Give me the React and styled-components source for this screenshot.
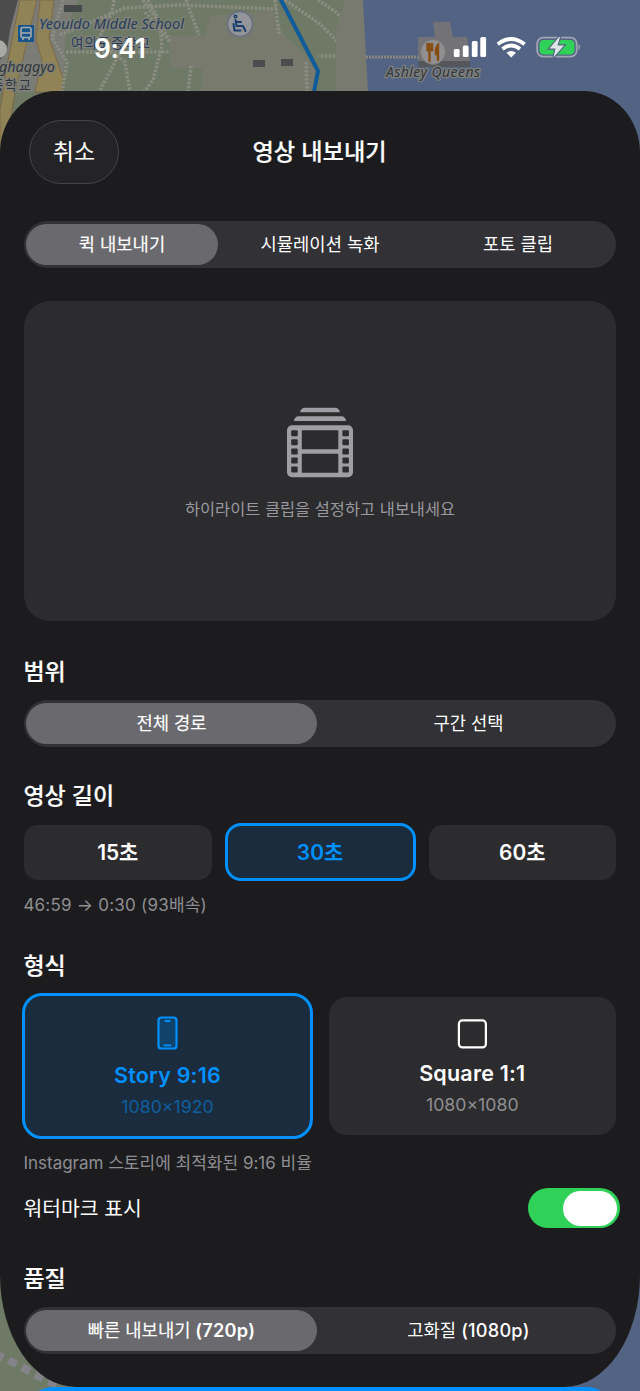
import React, { useState } from "react";
import styled, { createGlobalStyle, css } from "styled-components";

const GlobalStyle = createGlobalStyle`
  *, *::before, *::after { box-sizing: border-box; }
  html, body { margin: 0; padding: 0; background: #1c1c1e; }
  body { font-family: Inter, "Noto Sans CJK KR", sans-serif; color: #fff; -webkit-font-smoothing: antialiased; }
  button { font: inherit; color: inherit; border: 0; padding: 0; background: none; }
`;

const Screen = styled.div`
  position: relative;
  width: 640px;
  height: 1391px;
  overflow: hidden;
`;

const MapCanvas = styled.svg`
  position: absolute;
  inset: 0;
  width: 640px;
  height: 1391px;
`;

const StatusBar = styled.div`
  position: relative;
  display: flex;
  justify-content: space-between;
  height: 91px;
  padding: 33px 59px 0 94px;
`;

const Clock = styled.div`
  height: 30px;
  font-size: 26.4px;
  font-weight: 600;
  line-height: 30px;
  letter-spacing: -0.4px;
`;

const Indicators = styled.svg`
  width: 130px;
  height: 28px;
  display: block;
`;

const Sheet = styled.main`
  position: relative;
  display: flex;
  flex-direction: column;
  height: 1296px;
  padding: 29px 24px 0;
  background: #1c1c1e;
  border-radius: 56px 56px 76px 76px / 62px 62px 112px 112px;
`;

const SheetHeader = styled.header`
  display: grid;
  grid-template-columns: 90px 1fr 90px;
  align-items: center;
  height: 64px;
  padding: 0 5px;
`;

const CancelButton = styled.button`
  height: 64px;
  border-radius: 32px;
  background: #242426;
  border: 1px solid #454547;
  font-size: 23px;
  line-height: 32px;
`;

const Title = styled.h1`
  margin: 0 1px 0 0;
  text-align: center;
  font-size: 23.2px;
  line-height: 32px;
  font-weight: 500;
  -webkit-text-stroke: 0.2px currentColor;
`;

const Segments = styled.div`
  display: flex;
  gap: 6px;
  height: 47px;
  padding: 3px 2px;
  border-radius: 24px;
  background: #323135;
  margin-top: ${(p) => p.$top}px;
`;

const Segment = styled.button`
  flex: 1;
  height: 41px;
  border-radius: 21px;
  font-size: 17.7px;
  line-height: 41px;
  font-weight: 400;
  white-space: nowrap;
  ${(p) => p.$on && css`
    background: #6a696e;
    -webkit-text-stroke: 0.15px currentColor;
  `}
`;

const Resolution = styled.span`
  font-size: 18.2px;
  font-weight: ${(p) => (p.$on ? 600 : 500)};
  letter-spacing: 0.2px;
  -webkit-text-stroke: 0;
`;

const Preview = styled.section`
  display: flex;
  flex-direction: column;
  align-items: center;
  height: 320px;
  margin-top: 33px;
  padding-top: 106px;
  border-radius: 26px;
  background: #2c2c2e;
`;

const Hint = styled.p`
  margin: 18px 0 0;
  font-size: 16.4px;
  line-height: 24px;
  color: #98989e;
`;

const Heading = styled.h2`
  margin: ${(p) => p.$top}px 0 0 -0.6px;
  height: 32px;
  font-size: 23px;
  line-height: 32px;
  font-weight: 500;
  -webkit-text-stroke: 0.2px currentColor;
`;

const Caption = styled.p`
  margin: 12px 0 0 -0.6px;
  height: 24px;
  line-height: 24px;
  font-size: 17px;
  color: #8e8e93;
  letter-spacing: ${(p) => p.$track || 0}px;
`;

const selected = css`
  background: #1a2c3e;
  color: #0091ff;
  border: 3px solid #0091ff;
`;

const Durations = styled.div`
  display: grid;
  grid-template-columns: 187.5px 191px 187.5px;
  gap: 13px;
  align-items: center;
  margin-top: 11px;
`;

const Duration = styled.button`
  height: ${(p) => (p.$on ? 58 : 55)}px;
  padding-bottom: 2px;
  border-radius: ${(p) => (p.$on ? 16 : 14)}px;
  background: #2c2c2e;
  font-size: 20.9px;
  font-weight: 600;
  ${(p) => p.$on && selected}
`;

const Formats = styled.div`
  display: grid;
  grid-template-columns: 291px 287.5px;
  justify-content: space-between;
  align-items: center;
  margin: 11px 0 0 -2px;
`;

const Format = styled.button`
  display: flex;
  flex-direction: column;
  align-items: center;
  height: ${(p) => (p.$on ? 146 : 138)}px;
  padding-top: ${(p) => (p.$on ? 20 : 22)}px;
  border-radius: ${(p) => (p.$on ? 20 : 18)}px;
  background: #2c2c2e;
  ${(p) => p.$on && selected}
`;

const FormatName = styled.span`
  margin-top: ${(p) => (p.$on ? 11 : 10)}px;
  height: 28px;
  font-size: 21.5px;
  line-height: 28px;
  font-weight: 600;
  letter-spacing: 0.2px;
`;

const FormatSize = styled.span`
  margin-top: 6px;
  height: 24px;
  font-size: 17.7px;
  line-height: 24px;
  color: ${(p) => (p.$on ? "#0f5f9f" : "#8e8e93")};
`;

const ToggleRow = styled.label`
  display: flex;
  align-items: center;
  justify-content: space-between;
  height: 40px;
  margin: 13px -4px 0 -0.6px;
  font-size: 20.4px;
`;

const ToggleLabel = styled.span`
  padding-bottom: 2px;
`;

const Toggle = styled.span`
  display: flex;
  justify-content: flex-end;
  align-items: center;
  width: 92px;
  height: 40px;
  padding: 0 3px;
  border-radius: 20px;
  background: #30d158;
`;

const Knob = styled.span`
  width: 54px;
  height: 35px;
  border-radius: 18px;
  background: #fff;
`;

const BottomAction = styled.div`
  position: relative;
  width: 592px;
  height: 60px;
  margin: 0 auto;
  border-radius: 32px;
  background: #0091ff;
`;

const mapText = {
  fontFamily: '"Noto Sans", "Noto Sans CJK KR", sans-serif',
  paintOrder: "stroke",
  stroke: "#7f8079",
  strokeWidth: 2.6,
  strokeLinejoin: "round",
};

function MapBackdrop() {
  return (
    <MapCanvas viewBox="0 0 640 1391">
      <rect width="640" height="1391" fill="#6e7a65" />
      <path d="M56 0H78L66 30L62 92H0V0Z" fill="#7b7c76" />
      <path d="M170 36H204L210 16L272 10L284 34L317 66L313 92H202V68H170Z" fill="#777a6d" />
      <path d="M20 0H37L15 92L5 150H0V110L8 60Z" fill="#908356" stroke="#7f6848" />
      <path d="M40 0H54L49 38L63 78L62 92H35L42 60L36 40Z" fill="#908356" stroke="#7f6848" />
      <path d="M0 0H18L10 30L7 50L0 60Z" fill="#4b4c4b" />
      <circle cx="-2" cy="49" r="9" fill="#aaa9a5" />
      <g fill="none" stroke="#8b8d83" strokeWidth="3.500" strokeDasharray="2.500 1.500">
        <path d="M62 92L67 62L52 38L63 0M60 35L125 8L180 5L278 9M66 52H170M114 0L112 12L98 40L125 62L130 92M143 0L160 24L162 46L153 80L144 92M148 0L170 42L145 12M186 0L199 35M191 66L188 92M275 0L279 34M306 62L307 92M285 0L320 24L340 44M100 90L120 53M343 56H318M318 0L336 12L346 24" />
      </g>
      <path d="M64 5H82V12H64Z" fill="#454848" />
      <path d="M253 60h12v7h-12zM281 59h12v7h-12z" fill="#4b4c4d" />
      <path d="M363 0L368 92H336L336 30L345 0Z" fill="#787a70" />
      <path d="M363 0H640V1391H400L368 92Z" fill="#536384" />
      <path d="M280 -2L318 71L314 92" fill="none" stroke="#105b99" strokeWidth="4" />
      <path d="M366 57H420" stroke="#8a8981" strokeWidth="3" strokeDasharray="2 1" />
      <path d="M418 37H435L433 22H450L453 37H467L470 63H418Z" fill="#737377" />
      <path d="M418 61H470V67H419Z" fill="#55565a" />
      <circle cx="433" cy="52" r="12.5" fill="#928f91" stroke="#77777a" />
      <g fill="none" stroke="#874c12" strokeWidth="2.4" strokeLinecap="round">
        <path d="M429.500 44V61M427.500 44V50H432V44M438 60V45Q435 48 436 54H438" />
      </g>
      <rect x="18" y="25" width="16" height="17" fill="#17548b" />
      <g fill="none" stroke="#a5aaad" strokeWidth="1.6">
        <rect x="21" y="27.500" width="10" height="10" rx="2" />
        <path d="M21 33H31M23 38V40M29 38V40" />
      </g>
      <circle cx="240" cy="24" r="12.500" fill="#93959a" stroke="#686f80" strokeWidth="1.500" />
      <g fill="none" stroke="#193f6d" strokeWidth="2.600" strokeLinecap="round" strokeLinejoin="round">
        <circle cx="235.500" cy="16.500" r="0.700" />
        <path d="M235.500 20L236.500 26H243L245.500 31M237 22H241M233.500 24L234.500 30.500H240.500" strokeWidth="2" />
      </g>
      <g fill="#30363f" fontStyle="italic" fontSize="14.5">
        <text x="39" y="29" textLength="145" style={mapText} fill="#263d5b">Yeouido Middle School</text>
        <text x="-1" y="72" textLength="56" style={mapText}>ghaggyo</text>
        <text x="386" y="77" fontSize="14" textLength="94" style={mapText}>Ashley Queens</text>
      </g>
      <g fontSize="13.500">
        <text x="71" y="48" textLength="79" style={mapText} fill="#263d5b">여의도중학교</text>
        <text x="-9" y="90" textLength="40" style={mapText} fill="#30363f">중학교</text>
      </g>
      <path d="M-5 1354L10 1361L40 1377L62 1388" fill="none" stroke="#85838a" strokeWidth="8" strokeDasharray="9 6" />
    </MapCanvas>
  );
}

function StatusIcons() {
  return (
    <Indicators viewBox="0 0 130 28">
      <g fill="#fff">
        <rect x="2.800" y="16" width="5.800" height="8" rx="1.500" />
        <rect x="11.800" y="12.500" width="5.800" height="11.500" rx="1.500" />
        <rect x="20.800" y="8" width="5.800" height="16" rx="1.500" />
        <rect x="29.300" y="4" width="5.800" height="20" rx="1.500" />
      </g>
      <g fill="none" stroke="#fff" strokeWidth="3.800">
        <path d="M46.800 11.200Q60.200 0.800 73.600 11.200" />
        <path d="M51.400 16Q60.200 9 69 16" />
      </g>
      <path d="M55.500 19.800Q60.200 16 65 19.800L60.200 24.500Z" fill="#fff" />
      <rect x="86.200" y="4.700" width="39.500" height="19" rx="6" fill="none" stroke="#a0a6b3" strokeWidth="1.800" />
      <path d="M127.500 10.800Q130.500 14 127.500 17.500Z" fill="#a0a6b3" />
      <rect x="88.500" y="7" width="35" height="14.500" rx="4.200" fill="#30d158" />
      <path d="M108 4L98.500 15.500H104.500L102.500 24.500L113 12.500H106.500L109 4Z" fill="#dce5e3" stroke="#536384" strokeWidth="2.400" paintOrder="stroke" />
    </Indicators>
  );
}

function FilmStack() {
  const holes = [0, 1, 2, 3, 4];
  return (
    <svg width="68" height="72" viewBox="0 0 68 72">
      <path d="M14 5.300Q15 0.800 19 0.800H49Q53 0.800 54 5.300Z" fill="#9e9ea4" />
      <path d="M7.800 14Q8.800 9.300 12.800 9.300H55.200Q59.200 9.300 60.200 14Z" fill="#9e9ea4" />
      <rect x="1" y="18.300" width="66" height="52" rx="5" fill="#9e9ea4" />
      <g fill="#2c2c2e">
        <rect x="15.800" y="23.200" width="36.500" height="19" rx="0.600" />
        <rect x="15.800" y="46.800" width="36.500" height="19" rx="0.600" />
        {holes.map((i) => (
          <React.Fragment key={i}>
            <rect x="5.200" y={23.2 + i * 9.1} width="6.500" height="6" rx="1" />
            <rect x="56.400" y={23.2 + i * 9.1} width="6.500" height="6" rx="1" />
          </React.Fragment>
        ))}
      </g>
    </svg>
  );
}

function PhoneIcon() {
  return (
    <svg width="22" height="34" viewBox="0 0 22 34">
      <rect x="1.500" y="1.500" width="18" height="31" rx="2.800" fill="#11436a" stroke="#0091ff" strokeWidth="2.200" />
      <path d="M7.700 5H13.300M6.500 29.300H14.500" stroke="#0091ff" strokeWidth="1.800" />
    </svg>
  );
}

function SquareIcon() {
  return (
    <svg width="30" height="30" viewBox="0 0 30 30">
      <rect x="1.900" y="1.400" width="27" height="27" rx="3.500" fill="none" stroke="#fff" strokeWidth="2.200" />
    </svg>
  );
}

function SegmentedControl({ options, top }) {
  const [active, setActive] = useState(0);
  return (
    <Segments $top={top}>
      {options.map(({ name, detail }, i) => (
        <Segment key={name} $on={i === active} onClick={() => setActive(i)}>
          {name}
          {detail && <Resolution $on={i === active}> {detail}</Resolution>}
        </Segment>
      ))}
    </Segments>
  );
}

const modes = [{ name: "퀵 내보내기" }, { name: "시뮬레이션 녹화" }, { name: "포토 클립" }];
const ranges = [{ name: "전체 경로" }, { name: "구간 선택" }];
const qualities = [
  { name: "빠른 내보내기", detail: "(720p)" },
  { name: "고화질", detail: "(1080p)" },
];

export default function App() {
  return (
    <Screen>
      <GlobalStyle />
      <MapBackdrop />
      <StatusBar>
        <Clock>9:41</Clock>
        <StatusIcons />
      </StatusBar>
      <Sheet>
        <SheetHeader>
          <CancelButton>취소</CancelButton>
          <Title>영상 내보내기</Title>
        </SheetHeader>
        <SegmentedControl top={37} options={modes} />
        <Preview>
          <FilmStack />
          <Hint>하이라이트 클립을 설정하고 내보내세요</Hint>
        </Preview>
        <Heading $top={35}>범위</Heading>
        <SegmentedControl top={12} options={ranges} />
        <Heading $top={33}>영상 길이</Heading>
        <Durations>
          <Duration>15초</Duration>
          <Duration $on>30초</Duration>
          <Duration>60초</Duration>
        </Durations>
        <Caption $track={0.22}>46:59 → 0:30 (93배속)</Caption>
        <Heading $top={33}>형식</Heading>
        <Formats>
          <Format $on>
            <PhoneIcon />
            <FormatName $on>Story 9:16</FormatName>
            <FormatSize $on>1080×1920</FormatSize>
          </Format>
          <Format>
            <SquareIcon />
            <FormatName>Square 1:1</FormatName>
            <FormatSize>1080×1080</FormatSize>
          </Format>
        </Formats>
        <Caption>Instagram 스토리에 최적화된 9:16 비율</Caption>
        <ToggleRow>
          <ToggleLabel>워터마크 표시</ToggleLabel>
          <Toggle>
            <Knob />
          </Toggle>
        </ToggleRow>
        <Heading $top={35}>품질</Heading>
        <SegmentedControl top={12} options={qualities} />
      </Sheet>
      <BottomAction />
    </Screen>
  );
}
